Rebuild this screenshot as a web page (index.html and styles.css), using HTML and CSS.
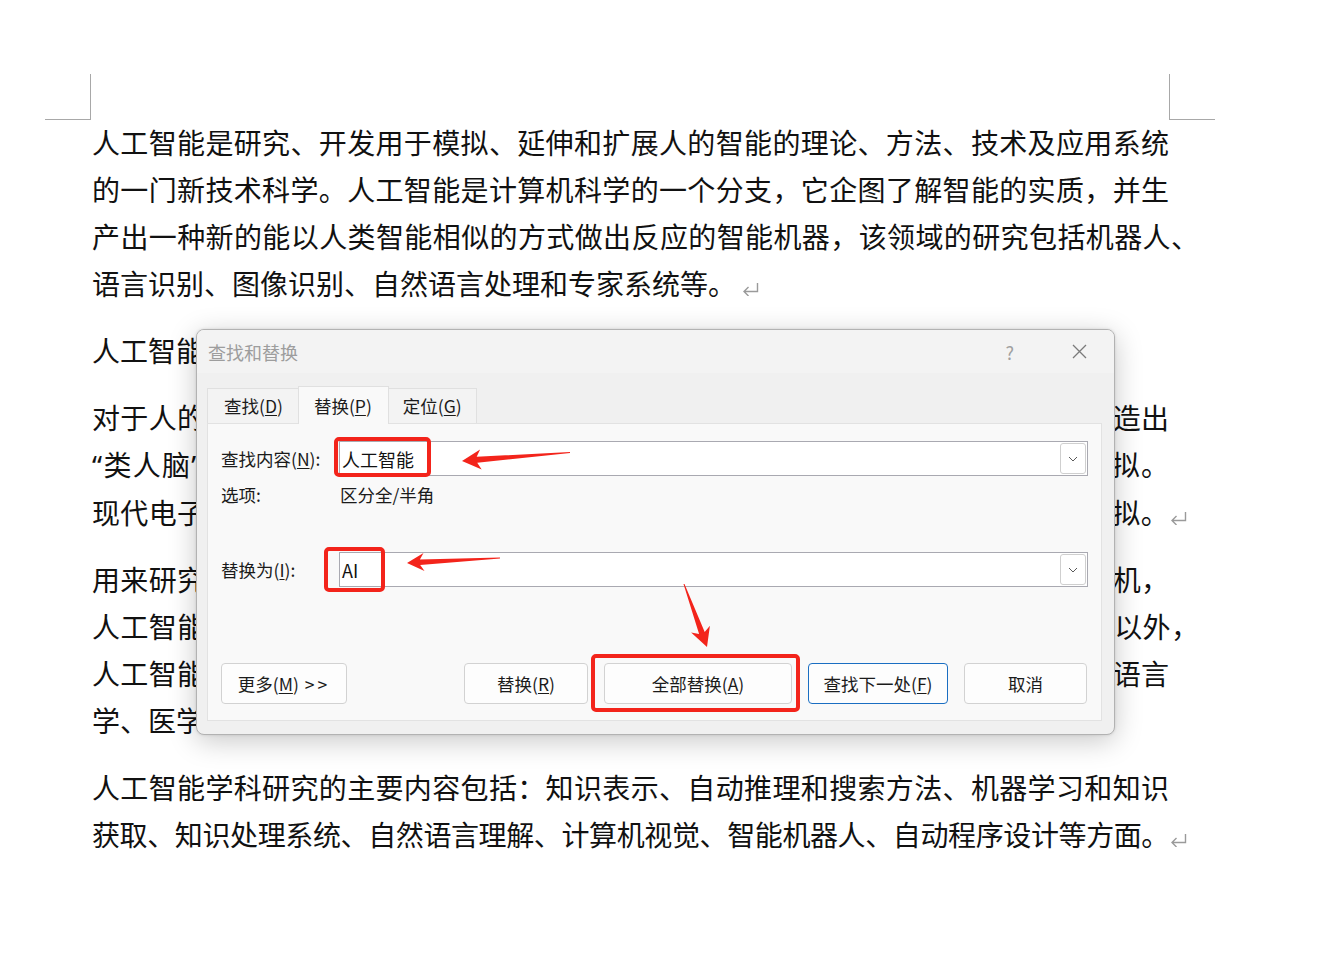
FILE: index.html
```
<!DOCTYPE html>
<html lang="zh-CN">
<head>
<meta charset="utf-8">
<title>查找和替换</title>
<link rel="stylesheet" href="styles.css">
</head>
<body>
<div class="page">
  <div class="marks"><span class="mark mark-left"></span><span class="mark mark-right"></span></div>
  <div class="doc">
    <p class="para">
      <span class="ln">人工智能是研究、开发用于模拟、延伸和扩展人的智能的理论、方法、技术及应用系统</span>
      <span class="ln">的一门新技术科学。人工智能是计算机科学的一个分支，它企图了解智能的实质，并生</span>
      <span class="ln ln-wide">产出一种新的能以人类智能相似的方式做出反应的智能机器，该领域的研究包括机器人、</span>
      <span class="ln ln-end">语言识别、图像识别、自然语言处理和专家系统等。<svg class="ret" viewBox="0 0 17 14"><path d="M15.5 1V9.5H2M6.5 5L2 9.5L6.5 14"/></svg></span>
    </p>
    <p class="para">
      <span class="ln ln-end">人工智能是一门极富挑战性的科学。<svg class="ret" viewBox="0 0 17 14"><path d="M15.5 1V9.5H2M6.5 5L2 9.5L6.5 14"/></svg></span>
    </p>
    <p class="para">
      <span class="ln">对于人的意识、思维的信息过程的模拟，人们在探索，希望能够像人那样思考，制造出</span>
      <span class="ln"><span class="q">“</span>类人脑<span class="q">”</span>的研究是通过计算机程序模仿人脑的思维方式，从而对人的思维进行模拟。</span>
      <span class="ln">现代电子计算机的出现使得对人类思维的研究有了新的技术手段，使思维得以被模拟。<svg class="ret ret-hang" viewBox="0 0 17 14"><path d="M15.5 1V9.5H2M6.5 5L2 9.5L6.5 14"/></svg></span>
    </p>
    <p class="para">
      <span class="ln">用来研究人工智能的主要物质基础以及能够实现人工智能技术平台的机器就是计算机，</span>
      <span class="ln ln-wide">人工智能的发展历史是和计算机科学技术的发展史联系在一起的。除了计算机科学以外，</span>
      <span class="ln">人工智能还涉及信息论、控制论、自动化、仿生学、生物学、心理学、数理逻辑、语言</span>
      <span class="ln ln-end">学、医学和哲学等多门学科。<svg class="ret" viewBox="0 0 17 14"><path d="M15.5 1V9.5H2M6.5 5L2 9.5L6.5 14"/></svg></span>
    </p>
    <p class="para">
      <span class="ln">人工智能学科研究的主要内容包括：知识表示、自动推理和搜索方法、机器学习和知识</span>
      <span class="ln ln-tight">获取、知识处理系统、自然语言理解、计算机视觉、智能机器人、自动程序设计等方面。<svg class="ret ret-hang" viewBox="0 0 17 14"><path d="M15.5 1V9.5H2M6.5 5L2 9.5L6.5 14"/></svg></span>
    </p>
  </div>

  <div class="dialog">
    <div class="titlebar">
      <span class="title">查找和替换</span>
      <span class="help">?</span>
      <svg class="close" viewBox="0 0 15 15"><path d="M1 1L14 14M14 1L1 14"/></svg>
    </div>
    <div class="dlg-body">
      <div class="tabs">
        <div class="tab tab-first">查找(<u>D</u>)</div>
        <div class="tab tab-active">替换(<u>P</u>)</div>
        <div class="tab">定位(<u>G</u>)</div>
      </div>
      <div class="panel">
        <div class="field-row">
          <span class="label">查找内容(<u>N</u>):</span>
          <div class="input"><span class="input-text">人工智能</span><span class="dd"><svg viewBox="0 0 10 6"><path d="M1 1L5 5L9 1"/></svg></span></div>
        </div>
        <div class="opt-row">
          <span class="label">选项:</span>
          <span class="opt-value">区分全/半角</span>
        </div>
        <div class="field-row field-row-replace">
          <span class="label">替换为(<u>I</u>):</span>
          <div class="input"><span class="input-text">AI</span><span class="dd"><svg viewBox="0 0 10 6"><path d="M1 1L5 5L9 1"/></svg></span></div>
        </div>
        <div class="buttons">
          <div class="btn btn-more">更多(<u>M</u>) <span class="gt">&gt;&gt;</span></div>
          <div class="btn btn-replace">替换(<u>R</u>)</div>
          <div class="btn btn-all">全部替换(<u>A</u>)</div>
          <div class="btn btn-next">查找下一处(<u>F</u>)</div>
          <div class="btn btn-cancel">取消</div>
        </div>
      </div>
    </div>
  </div>

  <svg class="annot" viewBox="0 0 1318 960">
    <rect class="hl" x="336" y="439" width="93" height="36" rx="3"/>
    <rect class="hl" x="326" y="549" width="57" height="41" rx="3"/>
    <rect class="hl" x="593" y="656" width="205" height="54" rx="3"/>
    <polygon class="arrow" points="462,461 480.1,449.5 476.7,456.8 570,452 570,453 477.2,462.8 481.7,469.5"/>
    <polygon class="arrow" points="407,563 423.5,553.1 419.9,559.5 500,557.6 500,558.4 420.2,565.1 424.5,571.1"/>
    <polygon class="arrow" points="707,647 691.1,632.6 699.1,633.9 683.5,584 684.5,584 704.7,631.9 709.9,625.8"/>
  </svg>
</div>
</body>
</html>
```
FILE: styles.css
```
html, body {
  margin: 0;
  background: #ffffff;
}

.page {
  position: relative;
  width: 1318px;
  height: 960px;
  overflow: hidden;
  font-family: "Noto Sans CJK SC", "Noto Sans", sans-serif;
}

/* page corner marks */
.marks {
  display: flex;
  justify-content: space-between;
  width: 1170px;
  margin-left: 45px;
  padding-top: 74px;
}

.mark {
  display: block;
  width: 45px;
  height: 45px;
  border-bottom: 1px solid #a8a8a8;
}

.mark-left {
  border-right: 1px solid #a8a8a8;
}

.mark-right {
  border-left: 1px solid #a8a8a8;
}

/* document text */
.doc {
  margin-top: -1px;
  margin-left: 92px;
  width: 1077px;
  font-size: 28px;
  line-height: 47px;
  color: #111111;
}

.para {
  margin: 0 0 20px;
}

.ln {
  display: block;
  text-align: justify;
  text-align-last: justify;
}

.ln-end {
  text-align-last: left;
}

.ln-wide {
  margin-right: -30px;
}

.ln-tight {
  letter-spacing: -0.45px;
}

.q {
  font-family: "Noto Sans", sans-serif;
}

.ret {
  display: inline-block;
  width: 17px;
  height: 14px;
  margin-left: 6px;
  vertical-align: -1px;
  fill: none;
  stroke: #9a9a9a;
  stroke-width: 1.4;
}

.ret-hang {
  margin-left: 1px;
  margin-right: -18px;
}

/* dialog */
.dialog {
  position: absolute;
  left: 196px;
  top: 329px;
  width: 919px;
  height: 406px;
  box-sizing: border-box;
  border: 1px solid #b2b2b2;
  border-radius: 8px;
  background: #f0f0f0;
  box-shadow: 0 6px 28px rgba(0, 0, 0, 0.22), 0 0 3px rgba(0, 0, 0, 0.12);
  overflow: hidden;
  display: flex;
  flex-direction: column;
  font-size: 17.5px;
  line-height: 24px;
  color: #1b1b1b;
}

.dialog u {
  text-decoration-thickness: 1px;
  text-underline-offset: 2px;
}

.titlebar {
  flex: none;
  height: 43px;
  display: flex;
  align-items: center;
  padding: 0 27px 0 11px;
  background: #f3f3f3;
}

.title {
  font-size: 18px;
  color: #9d9d9d;
}

.help {
  margin-left: auto;
  margin-right: 58px;
  font-size: 18px;
  color: #a0a0a0;
}

.close {
  width: 15px;
  height: 15px;
  fill: none;
  stroke: #7a7a7a;
  stroke-width: 1.3;
}

.dlg-body {
  flex: 1;
  display: flex;
  flex-direction: column;
  padding: 13px 12px 13px 10px;
}

.tabs {
  flex: none;
  height: 37px;
  display: flex;
  align-items: flex-end;
}

.tab {
  height: 35px;
  box-sizing: border-box;
  padding: 0 14px;
  display: flex;
  align-items: center;
  border: 1px solid #e0e0e0;
  border-bottom: 0;
  background: #f3f3f3;
}

.tab-first {
  padding: 0 15px 0 16px;
}

.tab + .tab {
  margin-left: -1px;
}

.tab-active {
  position: relative;
  z-index: 1;
  height: 38px;
  margin-bottom: -1px;
  padding: 0 16px 0 15px;
  background: #f9f9f9;
}

.panel {
  flex: 1;
  display: flex;
  flex-direction: column;
  border: 1px solid #e2e2e2;
  background: #f9f9f9;
  padding: 17px 13px 16px 13px;
}

.field-row {
  display: flex;
  align-items: center;
  height: 35px;
}

.field-row-replace {
  margin-top: 38px;
}

.opt-row {
  display: flex;
  align-items: center;
  height: 38px;
}

.label {
  flex: none;
  width: 118px;
}

.opt-value {
  padding-left: 1px;
}

.input {
  flex: 1;
  height: 35px;
  box-sizing: border-box;
  border: 1px solid #a9a9b1;
  background: #ffffff;
  display: flex;
  align-items: center;
}

.input-text {
  flex: 1;
  padding-left: 2px;
  font-size: 18px;
  color: #111111;
}

.dd {
  width: 26px;
  height: 31px;
  box-sizing: border-box;
  margin-right: 1px;
  border: 1px solid #cfcfcf;
  border-radius: 3px;
  background: #ffffff;
  display: flex;
  align-items: center;
  justify-content: center;
}

.dd svg {
  width: 10px;
  height: 6px;
  fill: none;
  stroke: #5a5a5a;
  stroke-width: 1;
}

.buttons {
  margin-top: auto;
  display: flex;
  gap: 16px;
  height: 41px;
}

.btn {
  height: 41px;
  box-sizing: border-box;
  border: 1px solid #d2d2d2;
  border-radius: 4px;
  background: #fdfdfd;
  display: flex;
  align-items: center;
  justify-content: center;
}

.btn-more {
  width: 126px;
}

.gt {
  margin-left: 6px;
  letter-spacing: 3px;
}

.btn-replace {
  width: 124px;
  margin-left: auto;
}

.btn-all {
  width: 188px;
}

.btn-next {
  width: 140px;
  border-color: #1a6ec2;
}

.btn-cancel {
  width: 123px;
  margin-right: 1px;
}

/* annotations */
.annot {
  position: absolute;
  left: 0;
  top: 0;
  width: 1318px;
  height: 960px;
  pointer-events: none;
}

.hl {
  fill: none;
  stroke: #f3241b;
  stroke-width: 4;
}

.arrow {
  fill: #f3241b;
}
```
